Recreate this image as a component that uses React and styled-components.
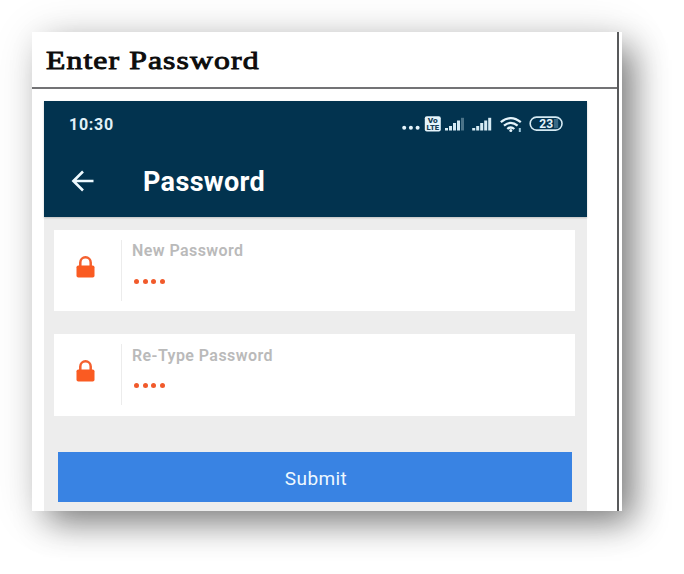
import React from "react";
import styled, { createGlobalStyle } from "styled-components";

const Global = createGlobalStyle`
  * { box-sizing: border-box; }
  body { margin: 0; background: #fff; font-family: Roboto, sans-serif; overflow: hidden; }
`;

const Page = styled.main`
  width: 684px;
  height: 574px;
  padding: 32px;
`;

const Sheet = styled.section`
  width: 590px;
  height: 479px;
  padding-right: 3px;
  background: #fff;
  box-shadow: 14px 14px 32px -3px rgba(0, 0, 0, 0.46), 4px 4px 44px rgba(0, 0, 0, 0.14);
`;

const SheetBody = styled.div`
  height: 100%;
  border-right: 2px solid #58595b;
`;

const SheetTitle = styled.h1`
  margin: 0;
  height: 57px;
  padding: 13px 0 0 14px;
  border-bottom: 2px solid #737375;
  font: 400 26px/31px "Liberation Serif", serif;
  color: #0c0c0c;
`;

const TitleText = styled.span`
  display: inline-block;
  transform: scaleX(1.22);
  transform-origin: left;
  letter-spacing: 0.9px;
  -webkit-text-stroke: 0.9px #0c0c0c;
  white-space: nowrap;
`;

const Phone = styled.div`
  width: 543px;
  height: 410px;
  margin: 12px 0 0 12px;
  background: #ededed;
`;

const Header = styled.header`
  height: 116px;
  background: #02334f;
  color: #fff;
  box-shadow: 0 1px 2px rgba(0, 0, 0, 0.2);
`;

const StatusBar = styled.div`
  height: 48px;
  padding: 0 23px 0 25px;
  display: flex;
  align-items: center;
  justify-content: space-between;
`;

const Clock = styled.time`
  font-size: 16px;
  font-weight: 700;
  letter-spacing: 0.75px;
  line-height: 20px;
  color: #e1f1f8;
`;

const StatusIcons = styled.svg`
  display: block;
  width: 163px;
  height: 20px;
`;

const TitleBar = styled.div`
  height: 66px;
  padding-left: 27px;
  display: flex;
  align-items: center;
`;

const BackIcon = styled.svg`
  display: block;
  width: 24px;
  height: 24px;
  margin: -2px 48px 0 0;
`;

const ScreenTitle = styled.h2`
  margin: 0;
  font-size: 27px;
  font-weight: 700;
  line-height: 32px;
  letter-spacing: 0.35px;
`;

const Form = styled.form`
  padding: 13px 12px 0 10px;
`;

const Field = styled.label`
  display: flex;
  height: ${(p) => p.$height}px;
  margin-bottom: ${(p) => p.$gap}px;
  padding-top: 10px;
  background: #fff;
`;

const IconCell = styled.span`
  width: 68px;
  height: 61px;
  padding: 16px 0 0 22px;
  border-right: 1px solid #ececec;
`;

const Lock = styled.svg`
  display: block;
  width: 19px;
  height: 22px;
`;

const FieldText = styled.span`
  padding-left: 10px;
`;

const FieldLabel = styled.span`
  display: block;
  height: 22px;
  font-size: 16px;
  font-weight: 600;
  line-height: ${(p) => p.$line}px;
  letter-spacing: 0.42px;
  white-space: nowrap;
  color: #bababa;
`;

const Dots = styled.span`
  display: flex;
  gap: 3.5px;
  padding: 17px 0 0 2px;
`;

const Dot = styled.i`
  width: 5px;
  height: 5px;
  border-radius: 50%;
  background: #f15a2b;
`;

const Submit = styled.button`
  display: block;
  width: 514px;
  height: 50px;
  margin: 0 0 0 4px;
  padding: 4px 0 0 2px;
  border: 0;
  background: #3983e3;
  color: #eef8ff;
  font: 400 19px/24px Roboto, sans-serif;
  letter-spacing: 0.4px;
`;

function Bars({ x, fadeLast }) {
  return (
    <g fill="#d5eaf3">
      {[2.5, 4.5, 7.5, 10, 12.7].map((h, i) => (
        <rect
          key={i}
          x={x + i * 4}
          y={15.5 - h}
          width="3"
          height={h}
          opacity={fadeLast && i === 4 ? 0.35 : 1}
        />
      ))}
    </g>
  );
}

function PasswordField({ label, line, height, gap }) {
  return (
    <Field $height={height} $gap={gap}>
      <IconCell>
        <Lock viewBox="0 0 19 22">
          <path d="M4.3 10V6.5a5.2 5.2 0 0 1 10.4 0V10" fill="none" stroke="#f4602f" strokeWidth="2.5" />
          <rect x="0.5" y="9.5" width="18" height="12" rx="1.8" fill="#fa5b22" />
        </Lock>
      </IconCell>
      <FieldText>
        <FieldLabel $line={line}>{label}</FieldLabel>
        <Dots>
          <Dot />
          <Dot />
          <Dot />
          <Dot />
        </Dots>
      </FieldText>
    </Field>
  );
}

export default function App() {
  return (
    <Page>
      <Global />
      <Sheet>
        <SheetBody>
          <SheetTitle>
            <TitleText>Enter Password</TitleText>
          </SheetTitle>
          <Phone>
            <Header>
              <StatusBar>
                <Clock>10:30</Clock>
                <StatusIcons viewBox="0 0 163 20">
                  <g fill="#e5f4fb">
                    <circle cx="3.2" cy="12.8" r="2" />
                    <circle cx="9.9" cy="12.8" r="2" />
                    <circle cx="16.6" cy="12.8" r="2" />
                    <rect x="23.8" y="1.2" width="16" height="15.4" rx="2" />
                  </g>
                  <g fill="#173f56" fontFamily="Roboto, sans-serif" fontWeight="900" textAnchor="middle">
                    <text x="31.8" y="8" fontSize="7" textLength="10" lengthAdjust="spacingAndGlyphs">Vo</text>
                    <text x="31.8" y="15.3" fontSize="6.5" textLength="12.5" lengthAdjust="spacingAndGlyphs">LTE</text>
                  </g>
                  <Bars x={44} fadeLast />
                  <Bars x={71.2} />
                  <g fill="none" stroke="#e5f4fb" strokeWidth="2.3">
                    <path d="M99.8 7.2Q109.8 -1 119.8 7.2" />
                    <path d="M103 10.7Q109.8 5 116.6 10.7" />
                    <path d="M106.3 14Q109.8 11 113.3 14" />
                  </g>
                  <circle cx="109.8" cy="15.4" r="1.5" fill="#e5f4fb" />
                  <path d="M118.8 13v4" stroke="#9cc7dc" strokeWidth="2" />
                  <rect x="129.2" y="2.1" width="31.8" height="13" rx="6.3" fill="none" stroke="#d5eaf3" strokeWidth="1.6" />
                  <path d="M153 4h4.2v9.2H153z" fill="#386985" />
                  <text x="145.2" y="13" textAnchor="middle" fontSize="12" fontWeight="700" fontFamily="Roboto, sans-serif" fill="#e5f4fb">23</text>
                </StatusIcons>
              </StatusBar>
              <TitleBar>
                <BackIcon viewBox="0 0 24 24" fill="none" stroke="#eefaff" strokeWidth="2.6">
                  <path d="M22.5 12H2M12 2.5L2.4 12l9.6 9.5" />
                </BackIcon>
                <ScreenTitle>Password</ScreenTitle>
              </TitleBar>
            </Header>
            <Form onSubmit={(e) => e.preventDefault()}>
              <PasswordField label="New Password" line={22} height={81} gap={23} />
              <PasswordField label="Re-Type Password" line={24} height={82} gap={36} />
              <Submit type="submit">Submit</Submit>
            </Form>
          </Phone>
        </SheetBody>
      </Sheet>
    </Page>
  );
}
